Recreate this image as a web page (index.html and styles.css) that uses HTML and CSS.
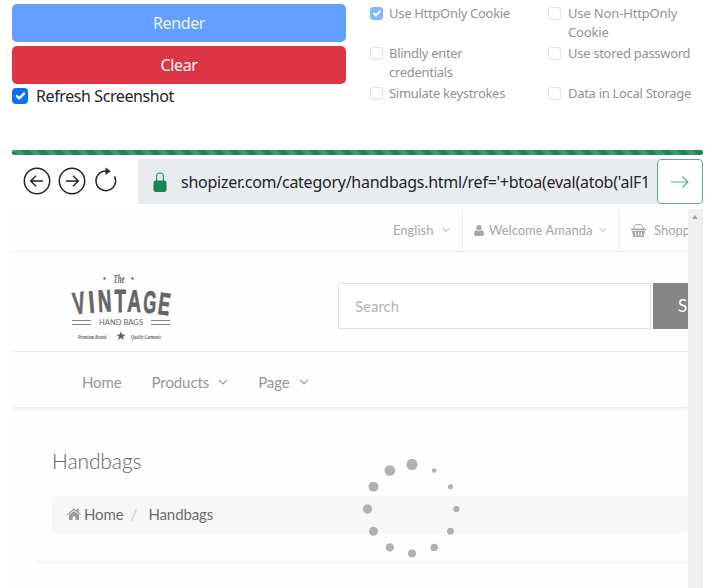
FILE: index.html
```html
<!DOCTYPE html>
<html lang="en">
<head>
<meta charset="utf-8">
<title>Shop preview</title>
<link rel="stylesheet" href="styles.css">
</head>
<body>
<svg class="defs" width="0" height="0">
  <symbol id="tick" viewBox="0 0 20 20"><path d="M6 10l3 3 6-6" fill="none" stroke="#fff" stroke-width="3" stroke-linecap="round" stroke-linejoin="round"/></symbol>
  <symbol id="chev" viewBox="0 0 10 6"><path d="M1 .8l4 4 4-4" fill="none" stroke="currentColor" stroke-width="1.2"/></symbol>
</svg>
<section class="controls">
  <div class="actions">
    <button class="btn render"><span>Render</span></button>
    <button class="btn clear"><span>Clear</span></button>
    <label class="refresh"><i class="box on"><svg><use href="#tick"/></svg></i><span>Refresh Screenshot</span></label>
  </div>
  <div class="options">
    <label><i class="box on"><svg><use href="#tick"/></svg></i><span>Use HttpOnly Cookie</span></label>
    <label><i class="box"></i><span class="wide">Use Non-HttpOnly<br>Cookie</span></label>
    <label><i class="box"></i><span>Blindly enter<br>credentials</span></label>
    <label><i class="box"></i><span>Use stored password</span></label>
    <label><i class="box"></i><span>Simulate keystrokes</span></label>
    <label><i class="box"></i><span>Data in Local Storage</span></label>
  </div>
</section>
<div class="progress"></div>
<div class="browser">
  <div class="tools">
    <svg width="28" height="28" viewBox="0 0 28 28"><circle cx="14" cy="14" r="12.7"/><path d="M20 14H8M13 8.700L7.700 14l5.300 5.300"/></svg>
    <svg width="28" height="28" viewBox="0 0 28 28"><circle cx="14" cy="14" r="12.7"/><path d="M8 14h12M15 8.700l5.300 5.300-5.300 5.300"/></svg>
    <svg class="reload" width="28" height="28" viewBox="0 0 28 28"><path d="M13.800 4A9.800 9.800 0 1 0 22.500 9.300"/><path class="solid" d="M13.500.4v7.600L18.700 4.200z"/></svg>
  </div>
  <div class="address">
    <svg width="14" height="20" viewBox="0 0 14 20"><path d="M3.600 9V4.400a3.400 3.400 0 0 1 6.800 0V9" fill="none" stroke="#359669" stroke-width="1.2"/><rect x=".5" y="8.500" width="13" height="11.500" rx="2" fill="#198754"/></svg>
    <div class="url">shopizer.com/category/handbags.html/ref='+btoa(eval(atob('alF1</div>
  </div>
  <button class="go"><svg width="20" height="14" viewBox="0 0 20 14"><path d="M1 7h17M12.500 1.500L18 7l-5.500 5.500" fill="none" stroke="#5eab87" stroke-width="1.2"/></svg></button>
</div>
<div class="frame">
  <main class="page">
    <div class="top">
      <div class="lang"><span>English</span><svg class="chev"><use href="#chev"/></svg></div>
      <div class="user"><svg width="10" height="11" viewBox="0 0 10 11"><circle cx="5" cy="2.800" r="2.700"/><path d="M2 5q3 2.400 6 0 2 .7 2 4 0 2-2 2H2q-2 0-2-2 0-3.300 2-4z"/></svg><span>Welcome Amanda</span><svg class="chev"><use href="#chev"/></svg></div>
      <div class="cart"><svg width="15" height="13" viewBox="0 0 15 13"><path d="M3 5V3.500Q3.200.6 5.500.6h4q2.300 0 2.500 2.900V5" fill="none" stroke="currentColor" stroke-width="1"/><path d="M0 4.500h15v1.800H0zM1 7h13l-1.200 6H2.200z"/><path d="M4.500 8l.3 4M7.500 8v4M10.500 8l-.3 4" stroke="#fff"/></svg><span>Shopp</span></div>
    </div>
    <div class="brand">
      <svg class="logo" width="102" height="70" viewBox="0 0 102 70" fill="#555">
        <g class="script"><text x="43.500" y="10.500" font-size="11.500" textLength="11" lengthAdjust="spacingAndGlyphs">The</text><text x="8" y="66.500" font-size="6.500" textLength="28" lengthAdjust="spacingAndGlyphs">Premium Brand</text><text x="61" y="66.500" font-size="6.500" textLength="30" lengthAdjust="spacingAndGlyphs">Quality Garments</text></g>
        <circle cx="34.500" cy="6.500" r="1.200"/><circle cx="62.500" cy="6.500" r="1.200"/>
        <g class="vintage">
          <text transform="translate(4.500 42.500) rotate(-8) scale(.58 1)" font-size="31">V</text>
          <text transform="translate(19.500 41) rotate(-5) scale(.68 1)" font-size="31">I</text>
          <text transform="translate(28.500 40) rotate(-3) scale(.6 1)" font-size="31">N</text>
          <text transform="translate(44.500 39.500) scale(.6 1)" font-size="31">T</text>
          <text transform="translate(57 39.500) rotate(2) scale(.62 1)" font-size="31">A</text>
          <text transform="translate(72.500 40.300) rotate(5) scale(.54 1)" font-size="31">G</text>
          <text transform="translate(87 41.800) rotate(8) scale(.57 1)" font-size="31">E</text>
        </g>
        <path d="M2 48.500h19M2 52.500h19M81 48.500h19M81 52.500h19" stroke="#777"/>
        <text class="hand" x="29" y="53.300" font-size="7.500" textLength="44">HAND BAGS</text>
        <path d="M51 59.500l1.300 3 3.200.2-2.500 2 .9 3.200-2.900-1.800-2.900 1.800.9-3.200-2.500-2 3.200-.2z"/>
      </svg>
      <div class="search"><div class="field">Search</div><div class="submit">S</div></div>
    </div>
    <nav><a>Home</a><a>Products<svg class="chev"><use href="#chev"/></svg></a><a>Page<svg class="chev"><use href="#chev"/></svg></a></nav>
    <h1>Handbags</h1>
    <div class="crumbs"><svg width="14" height="12" viewBox="0 0 14 12"><path d="M0 6.200L7 .3l2.700 2.300V.8h2v3.500L14 6.200l-.7.800L7 1.900.7 7z"/><path d="M2 7l5-4 5 4v5H8.400V8.500H5.600V12H2z"/></svg><span>Home</span><i>/</i><span>Handbags</span></div>
    <hr>
    <svg class="spinner" width="100" height="100" viewBox="0 0 100 100" fill="#b0b0b0"><circle cx="50" cy="5.500" r="5.600"/><circle cx="72.200" cy="11.500" r="2.300"/><circle cx="88.500" cy="27.700" r="2.500"/><circle cx="94.400" cy="50" r="3.100"/><circle cx="88.500" cy="72.200" r="3.400"/><circle cx="72.200" cy="88.400" r="3.700"/><circle cx="50" cy="94.500" r="4"/><circle cx="27.800" cy="88.400" r="4.200"/><circle cx="11.500" cy="72.200" r="4.500"/><circle cx="5.500" cy="50" r="4.700"/><circle cx="11.500" cy="27.700" r="5"/><circle cx="27.800" cy="11.500" r="5.300"/></svg>
  </main>
  <div class="scroll"><i></i></div>
</div>
</body>
</html>
```
FILE: styles.css
```css
* { box-sizing: border-box; }
body { margin: 0; padding: 4px 20px 0 12px; height: 588px; overflow: hidden; background: #fff; color: #212529; font: 16px/24px "Noto Sans", sans-serif; }
.defs { position: absolute; }
button { font: inherit; padding: 0; }
.controls { display: flex; height: 146px; }
.actions { width: 334px; }
.btn { display: block; width: 100%; height: 38px; margin-bottom: 4px; border: 0; border-radius: 5px; color: #fff; letter-spacing: -.4px; }
.render { background: #629ffe; color: #eff5ff; }
.clear { background: #dc3545; }
.refresh { display: flex; align-items: center; gap: 8px; height: 16px; letter-spacing: -.4px; }
.box { flex: none; display: block; border: 1px solid #dfdfdf; border-radius: 3.3px; background: #fff; width: 13px; height: 13px; }
.box svg { display: block; width: 100%; height: 100%; }
.box.on { border: 0; background: #86b7fe; }
.refresh .box { width: 16px; height: 16px; border-radius: 4px; background: #0d6efd; }
.options { display: grid; grid-template-columns: 178px 155px; grid-auto-rows: 40px; margin-left: 24px; font-size: 13px; line-height: 19px; letter-spacing: -.3px; color: #909294; }
.options label { display: flex; gap: 6px; }
.options label:nth-child(even) { gap: 7px; }
.options .box { margin-top: 3px; }
.options .wide { letter-spacing: -.15px; }
.progress { height: 5px; border-radius: 2px; background: #198754 linear-gradient(45deg, rgba(255,255,255,.15) 25%, transparent 25%, transparent 50%, rgba(255,255,255,.15) 50%, rgba(255,255,255,.15) 75%, transparent 75%) 0 0 / 16px 16px; }
.browser { display: flex; margin-top: 4px; height: 45px; }
.tools { display: flex; gap: 6.5px; width: 126px; padding: 8px 0 0 11px; }
.tools svg { fill: none; stroke: #212529; stroke-width: 1.5; }
.tools .solid { fill: #212529; stroke: none; }
.address { display: flex; align-items: center; width: 519px; background: #e9ecef; padding-left: 15px; }
.url { width: 466px; margin-left: 14px; overflow: hidden; white-space: nowrap; letter-spacing: -.26px; }
.go { width: 46px; border: 1px solid #5eab87; border-radius: 4px; background: #fff; display: flex; align-items: center; justify-content: center; }
.frame { display: flex; margin-top: 5px; height: 379px; }
.page { width: 676px; overflow: hidden; position: relative; background: #fefefe; font: 15px/20px Lato, sans-serif; color: #8a8a8a; }
.chev { width: 10px; height: 6px; flex: none; }
.top { height: 43px; border-bottom: 1px solid #ececec; display: flex; padding-left: 381px; color: #a5a7ad; font-size: 13px; }
.top > div { display: flex; align-items: center; height: 42px; flex: none; }
.top svg { fill: currentColor; }
.top .chev { width: 8px; }
.lang { width: 70px; gap: 9px; border-right: 1px solid #ececec; }
.user { width: 157px; padding-left: 11px; gap: 5px; border-right: 1px solid #ececec; }
.user .chev { margin-left: 1px; }
.cart { padding-left: 11px; gap: 8px; }
.brand { display: flex; height: 100px; border-bottom: 1px solid #ececec; padding: 20px 0 0 58px; }
.logo { flex: none; opacity: .9; }
.script { font-family: "Liberation Serif", serif; font-style: italic; font-weight: bold; }
.vintage { font-family: "Liberation Sans", sans-serif; font-weight: bold; stroke: #555; stroke-width: .8; }
.hand { font-family: Lato, sans-serif; }
.search { display: flex; gap: 2px; margin: 11px 0 0 166px; height: 46px; flex: none; line-height: 46px; }
.field { width: 313px; border: 1px solid #e2e2e2; padding-left: 16px; color: #b5b5b5; background: #fff; line-height: 44px; }
.submit { width: 35px; background: #868686; color: #fff; padding-left: 25px; font-size: 17px; }
nav { display: flex; gap: 30px; height: 55px; padding: 20px 0 0 70px; box-shadow: 0 1px 4px #e4e4e4; border-radius: 4px; color: #969696; letter-spacing: -.1px; }
nav a { display: flex; align-items: center; gap: 9px; height: 20px; }
h1 { margin: 40px 0 0 40px; font: 300 21px/28px Lato, sans-serif; letter-spacing: -.1px; color: #666; }
.crumbs { margin: 21px 0 0 40px; height: 37px; background: #f7f7f7; border-radius: 4px; padding: 0 0 2px 15px; display: flex; align-items: center; color: #6b6b6b; }
.crumbs svg { fill: #999; margin-right: 3px; }
.crumbs i { color: #ccc; font-style: normal; margin: 0 11px 0 7px; }
.crumbs span { letter-spacing: -.1px; }
hr { margin: 29px 0 0 24px; border: 0; border-top: 1px solid #eee; }
.spinner { position: absolute; left: 350px; top: 250px; }
.scroll { width: 15px; background: #f0f0f0; padding: 6px 4px; }
.scroll i { display: block; width: 0; border: 3.5px solid transparent; border-top: 0; border-bottom: 4px solid #a3a3a3; }
```
